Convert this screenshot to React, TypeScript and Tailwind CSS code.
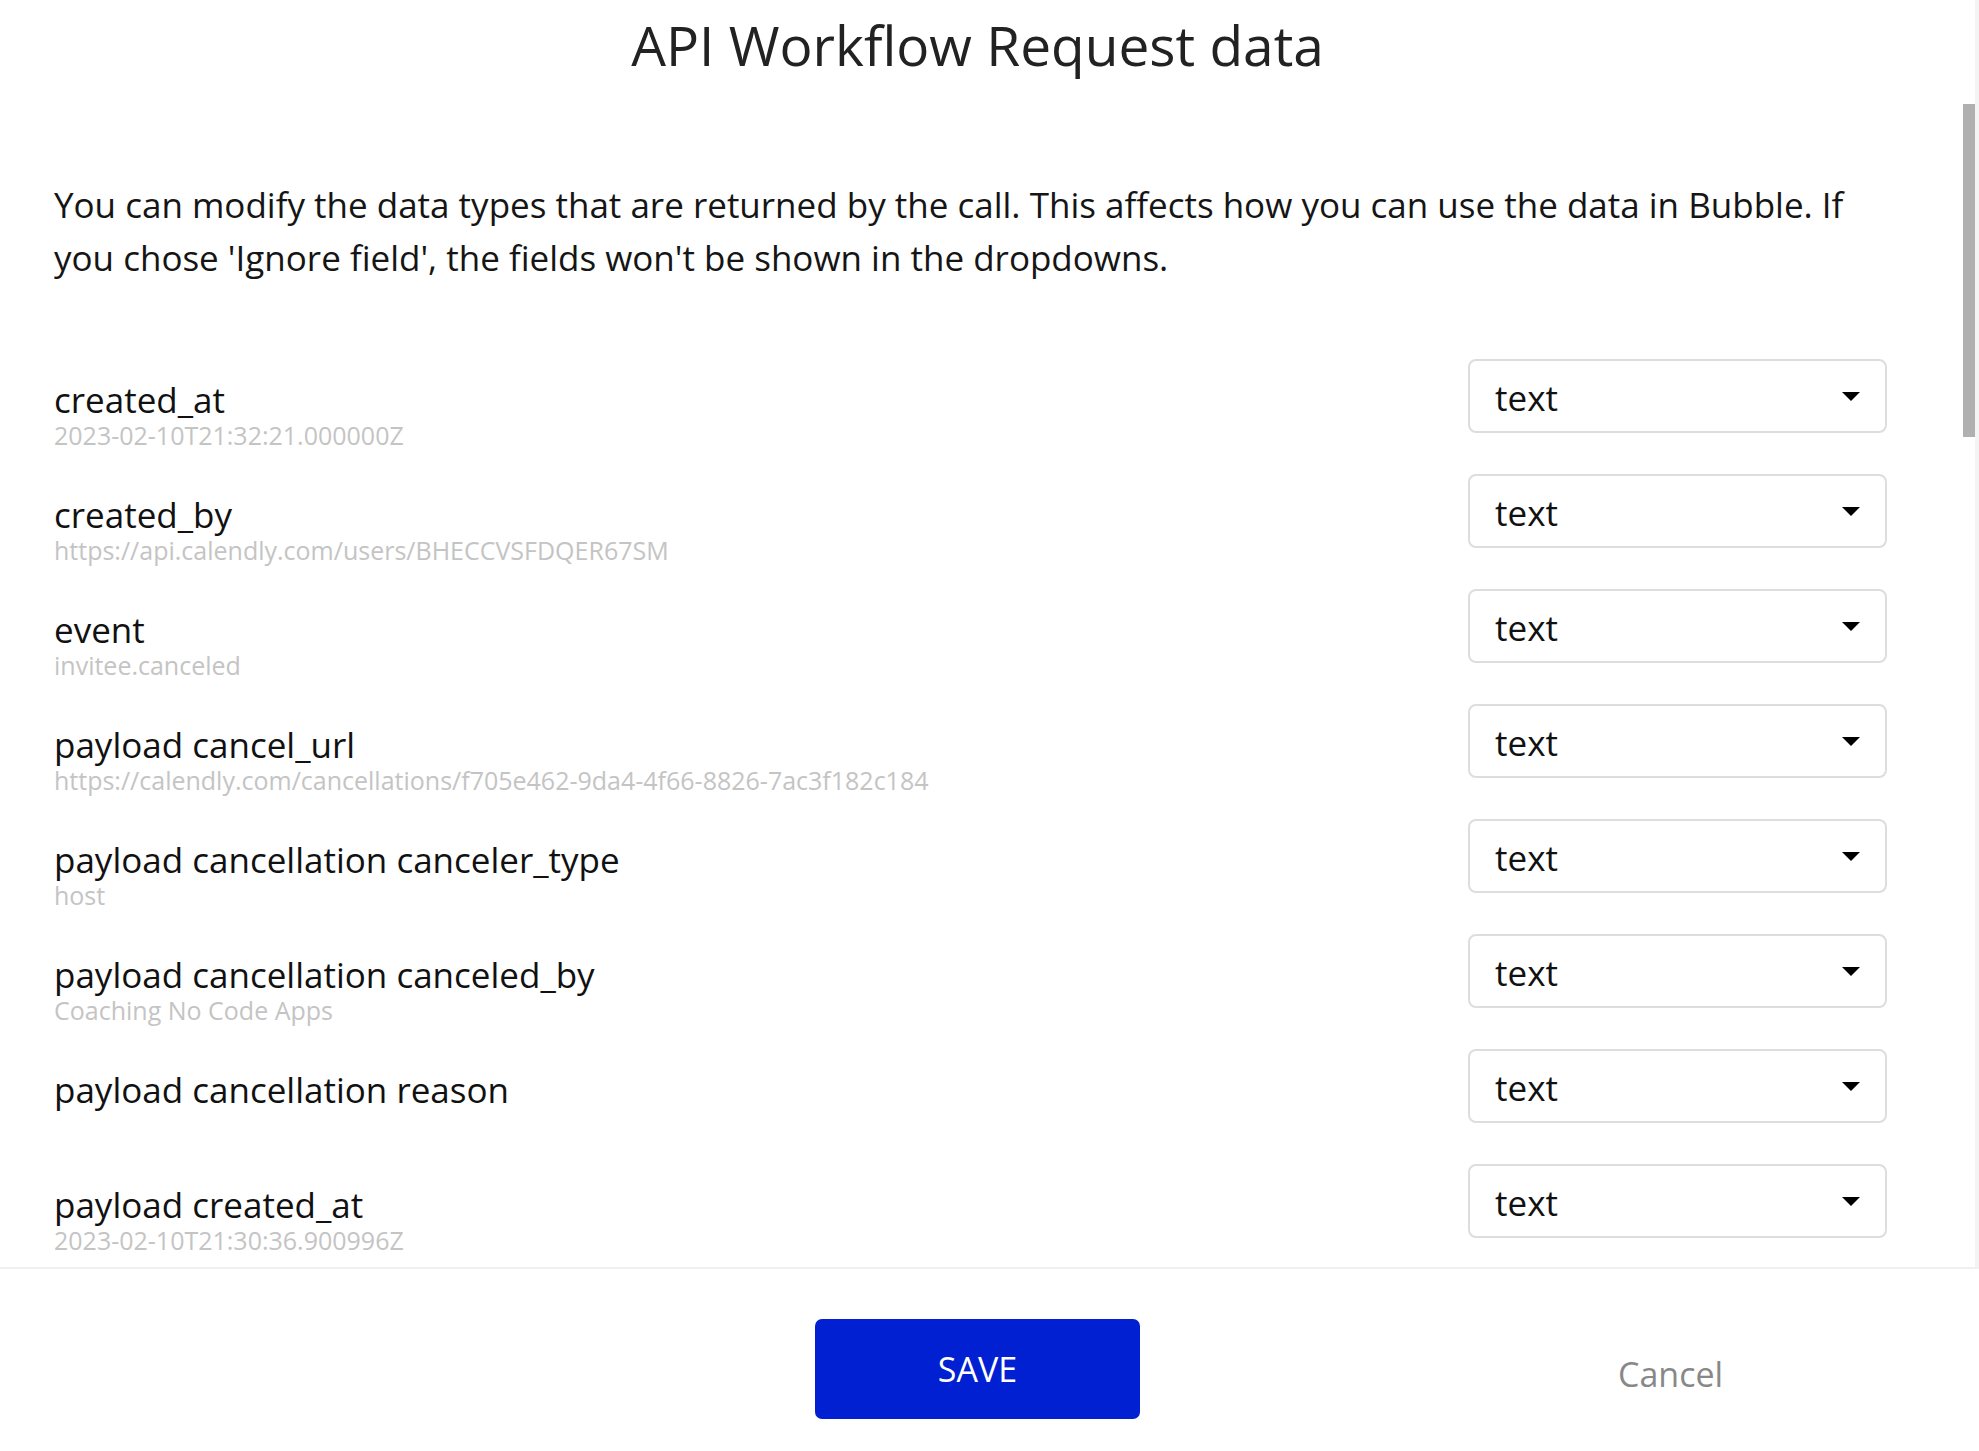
import React from 'react';

const fields = [
  { name: 'created_at', sample: '2023-02-10T21:32:21.000000Z' },
  { name: 'created_by', sample: 'https://api.calendly.com/users/BHECCVSFDQER67SM' },
  { name: 'event', sample: 'invitee.canceled' },
  { name: 'payload cancel_url', sample: 'https://calendly.com/cancellations/f705e462-9da4-4f66-8826-7ac3f182c184' },
  { name: 'payload cancellation canceler_type', sample: 'host' },
  { name: 'payload cancellation canceled_by', sample: 'Coaching No Code Apps' },
  { name: 'payload cancellation reason', sample: '' },
  { name: 'payload created_at', sample: '2023-02-10T21:30:36.900996Z' },
];

const TypeSelect: React.FC<{ value: string }> = ({ value }) => (
  <div className="flex h-[74px] w-[419px] shrink-0 items-center justify-between rounded-[8px] border-2 border-[#dddddd] bg-white pl-[25px] pr-[25px]">
    <span className="pt-[2px] text-[35px] leading-none text-[#111111]">{value}</span>
    <svg width="18" height="9" viewBox="0 0 18 9" className="block">
      <path d="M0 0 L18 0 L9 9 Z" fill="#000" />
    </svg>
  </div>
);

export default function App() {
  return (
    <div
      className="flex h-[1451px] w-full flex-col overflow-hidden bg-white"
      style={{ fontFamily: '"Open Sans", "Noto Sans", sans-serif' }}
    >
      {/* scrollable part */}
      <div className="flex h-[1267px] shrink-0">
        <div className="flex-1 overflow-hidden">
          <h1 className="pt-[13px] pr-[8px] text-center text-[55px] leading-[64px] font-normal text-[#222222]">
            API Workflow Request data
          </h1>

          <p className="mt-[101px] pl-[54px] pr-[100px] text-[35px] leading-[53px] text-[#151515]">
            You can modify the data types that are returned by the call. This affects how you can use the data in Bubble. If you chose 'Ignore field', the fields won't be shown in the dropdowns.
          </p>

          <div className="mt-[75px] flex flex-col gap-[41px] pl-[54px] pr-[76px]">
            {fields.map((f) => (
              <div key={f.name} className="flex items-center justify-between">
                <div className="flex flex-col">
                  <div className="pt-[7px] text-[35px] leading-[40px] text-[#111111]">{f.name}</div>
                  {f.sample && (
                    <div className="h-0">
                      <div className="mt-[3px] whitespace-nowrap text-[25px] leading-[24px] text-[#c4c4c4]">{f.sample}</div>
                    </div>
                  )}
                </div>
                <TypeSelect value="text" />
              </div>
            ))}
          </div>
        </div>

        {/* scrollbar */}
        <div className="flex w-[16px] shrink-0">
          <div className="w-[12px] pt-[104px]">
            <div className="h-[333px] w-[12px] bg-[#b0b0b0]" />
          </div>
          <div className="w-[4px] bg-[#f4f4f4]" />
        </div>
      </div>

      <div className="h-[2px] shrink-0 bg-[#f0f0f0]" />

      {/* footer */}
      <div className="flex items-center pl-[815px] pt-[50px]">
        <button className="flex h-[100px] w-[325px] items-center justify-center rounded-[7px] bg-[#0020d2] text-[34px] text-white">
          SAVE
        </button>
        <button className="ml-[478px] mt-[10px] text-[34px] text-[#888888]">Cancel</button>
      </div>
    </div>
  );
}
